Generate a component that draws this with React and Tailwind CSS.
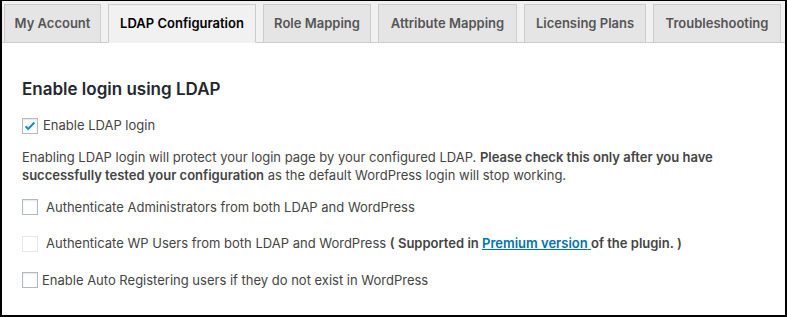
import { useState } from "react";

const tabs = [
  { label: "My Account", w: "w-[97px]" },
  { label: "LDAP Configuration", w: "w-[148px]" },
  { label: "Role Mapping", w: "w-[108px]" },
  { label: "Attribute Mapping", w: "w-[139px]" },
  { label: "Licensing Plans", w: "w-[122px]" },
  { label: "Troubleshooting", w: "w-[128px]" },
];

function Box({ checked, disabled, onChange }) {
  return (
    <button
      type="button"
      disabled={disabled}
      onClick={onChange}
      className={`w-4 h-4 shrink-0 flex items-center justify-center bg-white border ${
        disabled ? "border-[#e8e8e8]" : "border-[#b4b9be] shadow-[inset_0_1px_2px_rgba(0,0,0,0.1)]"
      }`}
    >
      {checked && (
        <svg viewBox="0 0 16 16" className="w-[14px] h-[14px]">
          <path d="M3 8.2l3 3.1L13 4" fill="none" stroke="#1e8cbe" strokeWidth="2.4" />
        </svg>
      )}
    </button>
  );
}

export default function App() {
  const [active, setActive] = useState(1);
  const [opts, setOpts] = useState({ ldap: true, admins: false, auto: false });
  const flip = (k) => setOpts((p) => ({ ...p, [k]: !p[k] }));

  return (
    <div className="w-[787px] h-[317px] border-2 border-t border-black bg-white text-[#444] font-['Inter','Liberation_Sans',sans-serif] flex flex-col overflow-hidden">
      <div className="bg-[#f1f1f1] border-b border-[#ccc] pt-[3px] pl-[2px] flex gap-[7px] h-[42px] shrink-0">
        {tabs.map((t, i) => (
          <button
            key={t.label}
            onClick={() => setActive(i)}
            className={`${t.w} h-[39px] shrink-0 whitespace-nowrap text-center border border-[#ccc] text-[13px] font-semibold ${
              i === active ? "bg-[#f1f1f1] text-black border-b-[#f1f1f1]" : "bg-[#e5e5e5] text-[#555]"
            }`}
          >
            {t.label}
          </button>
        ))}
      </div>

      <div className="px-[20px] pt-[34px] text-[13px]">
        <h2 className="text-[17px] font-semibold text-[#23282d] leading-[24px]">Enable login using LDAP</h2>

        <label className="flex items-center gap-[5px] mt-[15px]">
          <Box checked={opts.ldap} onChange={() => flip("ldap")} />
          <span>Enable LDAP login</span>
        </label>

        <p className="mt-[12px] leading-[18px]">
          Enabling LDAP login will protect your login page by your configured LDAP.{" "}
          <b className="font-semibold">Please check this only after you have successfully tested your configuration</b> as
          the default WordPress login will stop working.
        </p>

        <label className="flex items-center gap-[8px] mt-[14px]">
          <Box checked={opts.admins} onChange={() => flip("admins")} />
          <span>Authenticate Administrators from both LDAP and WordPress</span>
        </label>

        <div className="flex items-center gap-[8px] mt-[17px]">
          <Box disabled />
          <span>
            Authenticate WP Users from both LDAP and WordPress <b className="font-semibold">( Supported in </b>
            <a href="#" className="text-[#0073aa] underline font-semibold">
              Premium version{" "}
            </a>
            <b className="font-semibold">of the plugin. )</b>
          </span>
        </div>

        <label className="flex items-center gap-[4px] mt-[17px]">
          <Box checked={opts.auto} onChange={() => flip("auto")} />
          <span>Enable Auto Registering users if they do not exist in WordPress</span>
        </label>
      </div>
    </div>
  );
}
